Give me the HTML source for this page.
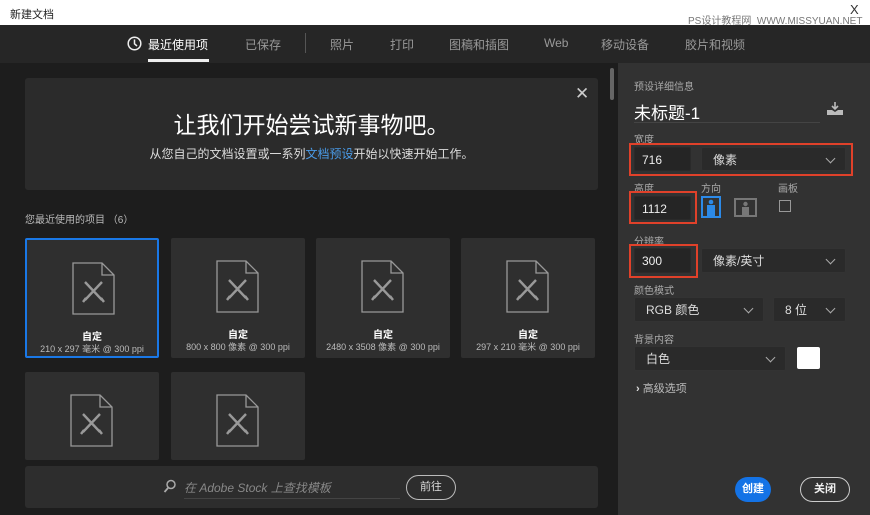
<!DOCTYPE html>
<html><head><meta charset="utf-8"><style>
*{margin:0;padding:0;box-sizing:border-box}
body{width:870px;height:515px;overflow:hidden;background:#1d1d1d;font-family:"Liberation Sans","Noto Sans CJK SC",sans-serif;position:relative;color:#ccc}
.a{position:absolute}
.tab{position:absolute;top:36px;font-size:12px;color:#999}
.card{position:absolute;background:#2f2f2f;border-radius:2px}
.card .t{position:absolute;left:0;right:0;text-align:center;top:88px;font-size:10px;color:#fff;font-weight:bold}
.card .s{position:absolute;left:0;right:0;text-align:center;top:102px;font-size:9px;color:#bbb}
.card svg{position:absolute;left:45px;top:22px}
.lbl{position:absolute;font-size:10px;color:#aaa;left:634px}
.in{position:absolute;background:#252525;border:1px solid #2a2a2a;border-radius:2px;font-size:12px;color:#eee;padding-left:7px;line-height:24px}
.sel{position:absolute;background:#2a2a2a;border:1px solid #333;border-radius:2px;font-size:12px;color:#ddd;padding-left:11px;line-height:24px}
.sel:after{content:"";position:absolute;right:11px;top:7px;width:6px;height:6px;border-right:1.5px solid #aaa;border-bottom:1.5px solid #aaa;transform:rotate(45deg)}
.red{position:absolute;border:2px solid #e0412a}
</style></head><body>
<div class="a" style="left:0;top:0;width:870px;height:25px;background:#fff"></div>
<div class="a" style="left:10px;top:6px;font-size:11px;color:#222">新建文档</div>
<div class="a" style="left:850px;top:2px;font-size:13px;color:#333">X</div>
<div class="a" style="left:688px;top:12px;font-size:10px;color:#777">PS设计教程网 &nbsp;WWW.MISSYUAN.NET</div>
<div class="a" style="left:0;top:25px;width:870px;height:38px;background:#262626"></div>
<svg class="a" style="left:127px;top:36px" width="15" height="15" viewBox="0 0 15 15"><circle cx="7.5" cy="7.5" r="6.3" fill="none" stroke="#eee" stroke-width="1.5"/><path d="M7.5 3.5V7.8L10 10" fill="none" stroke="#eee" stroke-width="1.5"/></svg>
<div class="tab" style="left:148px;color:#fff">最近使用项</div>
<div class="a" style="left:148px;top:59px;width:61px;height:3px;background:#eee"></div>
<div class="tab" style="left:245px">已保存</div>
<div class="a" style="left:305px;top:33px;width:1px;height:20px;background:#555"></div>
<div class="tab" style="left:330px">照片</div>
<div class="tab" style="left:390px">打印</div>
<div class="tab" style="left:449px">图稿和插图</div>
<div class="tab" style="left:544px">Web</div>
<div class="tab" style="left:601px">移动设备</div>
<div class="tab" style="left:685px">胶片和视频</div>
<div class="a" style="left:610px;top:68px;width:4px;height:32px;background:#666;border-radius:2px"></div>
<div class="a" style="left:618px;top:63px;width:252px;height:452px;background:#323232"></div>
<div class="a" style="left:25px;top:78px;width:573px;height:112px;background:#2b2b2b;border-radius:3px"></div>
<div class="a" style="left:575px;top:84px;font-size:17px;color:#ccc">✕</div>
<div class="a" style="left:25px;top:106px;width:573px;text-align:center;font-size:23px;color:#fff">让我们开始尝试新事物吧。</div>
<div class="a" style="left:25px;top:145px;width:573px;text-align:center;font-size:12px;color:#ddd">从您自己的文档设置或一系列<span style="color:#4a9be8">文档预设</span>开始以快速开始工作。</div>
<div class="a" style="left:25px;top:211px;font-size:10px;color:#bbb">您最近使用的项目 （6）</div>
<svg width="0" height="0" style="position:absolute"><defs><g id="doc"><path d="M1 1H30L42 13V52H1Z M30 1V13H42" fill="none" stroke="#999" stroke-width="1.3"/><path d="M13 20L30 38M30 20L13 38M11 40L14 36M32 40L29 36" fill="none" stroke="#999" stroke-width="2.4"/></g></defs></svg>
<div class="card" style="left:25px;top:238px;width:134px;height:120px;border:2px solid #1a78e6"><svg width="44" height="54"><use href="#doc"/></svg><div class="t">自定</div><div class="s">210 x 297 毫米 @ 300 ppi</div></div>
<div class="card" style="left:171px;top:238px;width:134px;height:120px"><svg width="44" height="54"><use href="#doc"/></svg><div class="t">自定</div><div class="s">800 x 800 像素 @ 300 ppi</div></div>
<div class="card" style="left:316px;top:238px;width:134px;height:120px"><svg width="44" height="54"><use href="#doc"/></svg><div class="t">自定</div><div class="s">2480 x 3508 像素 @ 300 ppi</div></div>
<div class="card" style="left:461px;top:238px;width:134px;height:120px"><svg width="44" height="54"><use href="#doc"/></svg><div class="t">自定</div><div class="s">297 x 210 毫米 @ 300 ppi</div></div>
<div class="card" style="left:25px;top:372px;width:134px;height:88px"><svg width="44" height="54"><use href="#doc"/></svg></div>
<div class="card" style="left:171px;top:372px;width:134px;height:88px"><svg width="44" height="54"><use href="#doc"/></svg></div>
<div class="a" style="left:25px;top:466px;width:573px;height:42px;background:#2d2d2d;border-radius:3px"></div>
<svg class="a" style="left:163px;top:479px" width="13" height="14"><circle cx="8" cy="5.5" r="4" fill="none" stroke="#aaa" stroke-width="1.5"/><path d="M5 9L1.5 13" stroke="#aaa" stroke-width="1.8"/></svg>
<div class="a" style="left:184px;top:479px;font-size:12px;color:#888;font-style:italic">在 Adobe Stock 上查找模板</div>
<div class="a" style="left:184px;top:498px;width:216px;height:1px;background:#444"></div>
<div class="a" style="left:406px;top:475px;width:50px;height:25px;border:1.5px solid #bbb;border-radius:13px;font-size:11px;color:#ddd;text-align:center;line-height:22px">前往</div>
<div class="lbl" style="top:78px">预设详细信息</div>
<div class="a" style="left:634px;top:99px;font-size:17px;color:#fff">未标题-1</div>
<div class="a" style="left:634px;top:122px;width:186px;height:1px;background:#444"></div>
<svg class="a" style="left:826px;top:101px" width="18" height="15"><path d="M9 1V8M6 5L9 8L12 5" fill="none" stroke="#bbb" stroke-width="1.6"/><path d="M1 9H6L9 11L12 9H17V14H1Z" fill="#bbb"/></svg>
<div class="lbl" style="top:131px">宽度</div>
<div class="in" style="left:634px;top:147px;width:57px;height:24px">716</div>
<div class="sel" style="left:701px;top:147px;width:145px;height:24px">像素</div>
<div class="red" style="left:629px;top:143px;width:224px;height:33px"></div>
<div class="lbl" style="top:180px">高度</div>
<div class="lbl" style="top:180px;left:701px">方向</div>
<div class="lbl" style="top:180px;left:778px">画板</div>
<div class="in" style="left:634px;top:196px;width:57px;height:24px">1112</div>
<div class="red" style="left:629px;top:191px;width:68px;height:33px"></div>
<svg class="a" style="left:701px;top:196px" width="20" height="22"><rect x="1" y="1" width="18" height="20" fill="none" stroke="#2c8ae8" stroke-width="2"/><circle cx="10" cy="6" r="2.3" fill="#2c8ae8"/><path d="M6 9H14V20H6Z" fill="#2c8ae8"/></svg>
<svg class="a" style="left:734px;top:198px" width="23" height="19"><rect x="1" y="1" width="21" height="17" fill="none" stroke="#777" stroke-width="2"/><circle cx="11.5" cy="6" r="2.2" fill="#777"/><path d="M8 9H15V17H8Z" fill="#777"/></svg>
<div class="a" style="left:779px;top:200px;width:12px;height:12px;border:1.5px solid #999"></div>
<div class="lbl" style="top:233px">分辨率</div>
<div class="in" style="left:634px;top:248px;width:57px;height:25px">300</div>
<div class="sel" style="left:701px;top:248px;width:145px;height:25px">像素/英寸</div>
<div class="red" style="left:629px;top:244px;width:69px;height:34px"></div>
<div class="lbl" style="top:282px">颜色模式</div>
<div class="sel" style="left:634px;top:297px;width:130px;height:25px">RGB 颜色</div>
<div class="sel" style="left:773px;top:297px;width:73px;height:25px">8 位</div>
<div class="lbl" style="top:331px">背景内容</div>
<div class="sel" style="left:634px;top:346px;width:152px;height:25px">白色</div>
<div class="a" style="left:797px;top:347px;width:23px;height:22px;background:#fff;border-radius:2px"></div>
<div class="a" style="left:636px;top:380px;font-size:11px;color:#bbb"><span style="color:#ddd;font-weight:bold">›</span> 高级选项</div>
<div class="a" style="left:735px;top:477px;width:36px;height:25px;background:#1473e6;border-radius:13px;font-size:11px;color:#fff;text-align:center;line-height:25px;font-weight:bold">创建</div>
<div class="a" style="left:800px;top:477px;width:50px;height:25px;border:1.5px solid #ccc;border-radius:13px;font-size:11px;color:#eee;text-align:center;line-height:22px;font-weight:bold">关闭</div>
</body></html>
